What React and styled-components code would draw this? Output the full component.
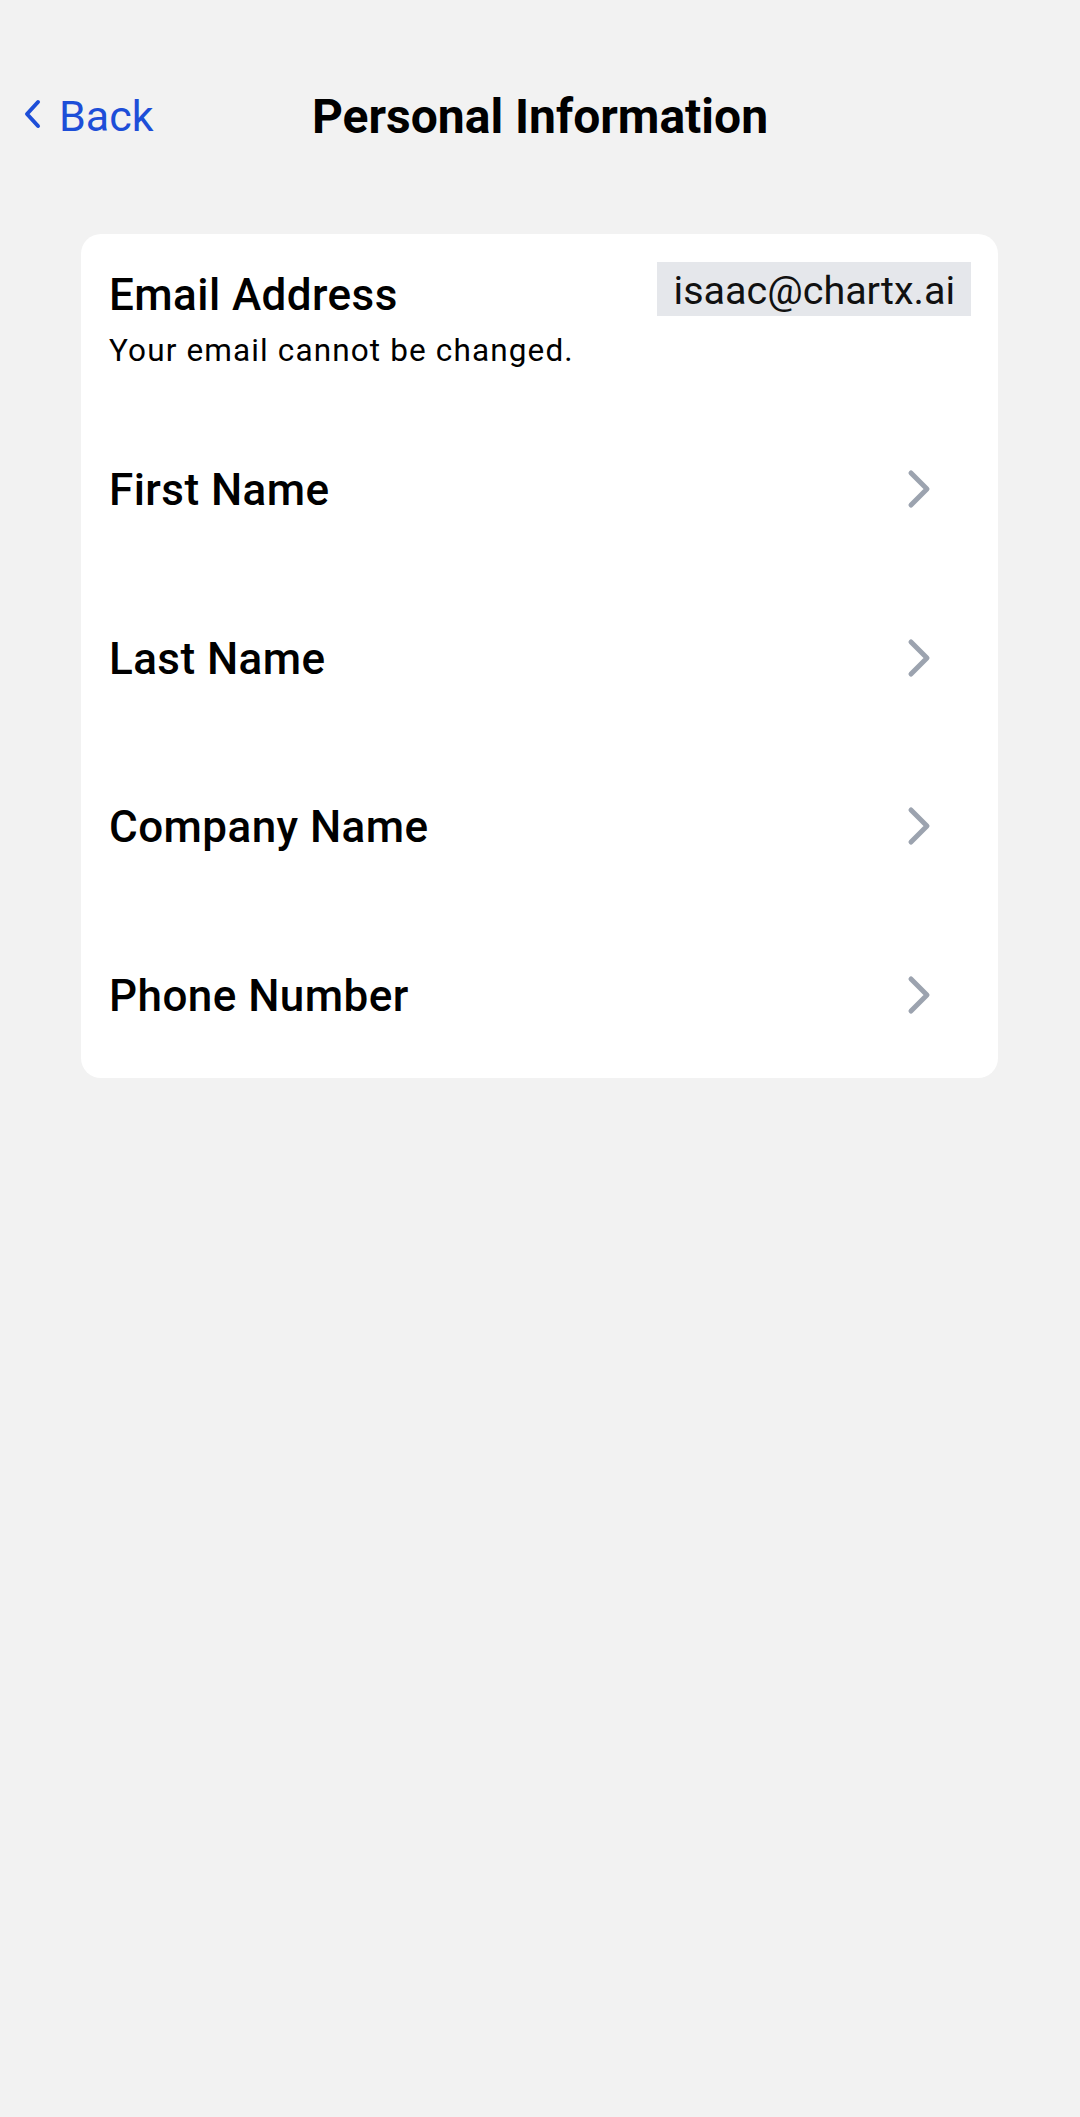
import styled, { createGlobalStyle } from "styled-components";

const GlobalStyle = createGlobalStyle`
  html, body {
    margin: 0;
    padding: 0;
    background: #f2f2f2;
  }
  body {
    font-family: Roboto, "Noto Sans", "Liberation Sans", sans-serif;
    color: #0a0a0a;
    -webkit-font-smoothing: antialiased;
  }
  * { box-sizing: border-box; }
`;

const Page = styled.div`
  width: 1080px;
  min-height: 2117px;
  background: #f2f2f2;
`;

const Header = styled.header`
  /* title centred on page, back link on the left */
  display: grid;
  grid-template-columns: 1fr auto 1fr;
  align-items: center;
  height: 70px;
  margin-top: 81px;
  padding: 0 23px;
`;

const BackButton = styled.button`
  justify-self: start;
  display: flex;
  align-items: center;
  gap: 16px;
  background: none;
  border: none;
  padding: 0;
  font-family: inherit;
  font-size: 43px;
  font-weight: 400;
  color: #1d4ed8;
  cursor: pointer;

  & svg {
    width: 20px;
    height: 32px;
    margin-top: -4px;
  }
`;

const Title = styled.h1`
  margin: 0;
  font-size: 48px;
  font-weight: 700;
  color: #000;
  white-space: nowrap;
`;

const Card = styled.section`
  margin: 83px 82px 0 81px;
  background: #fff;
  border-radius: 20px;
  overflow: hidden;
`;

const EmailBlock = styled.div`
  display: flex;
  justify-content: space-between;
  align-items: flex-start;
  height: 170px;
  padding: 0 27px 0 28px;
`;

const EmailText = styled.div`
  padding-top: 35px;
`;

const Label = styled.div`
  font-size: 44px;
  font-weight: 500;
  line-height: 1.2;
  letter-spacing: 0.01em;
  color: #000;
`;

const Hint = styled.div`
  margin-top: 9px;
  font-size: 31.5px;
  line-height: 1.3;
  letter-spacing: 0.036em;
  color: #000;
`;

const EmailBadge = styled.div`
  margin-top: 28px;
  height: 54px;
  display: flex;
  align-items: center;
  padding: 3px 16px 0 17px;
  background: #e5e7eb;
  font-size: 39.5px;
  color: #111;
`;

const Row = styled.button`
  width: 100%;
  height: 168.5px;
  display: flex;
  align-items: center;
  justify-content: space-between;
  padding: 5px 67px 0 28px;
  background: none;
  border: none;
  font-family: inherit;
  text-align: left;
  cursor: pointer;

  & svg {
    width: 24px;
    height: 40px;
    flex-shrink: 0;
    margin-top: -3px;
  }
`;

function ChevronLeft() {
  return (
    <svg viewBox="0 0 20 32" fill="none">
      <path
        d="M15 4 L4 16 L15 28"
        stroke="currentColor"
        strokeWidth="4"
        strokeLinecap="round"
        strokeLinejoin="round"
      />
    </svg>
  );
}

function ChevronRight() {
  return (
    <svg viewBox="0 0 24 40" fill="none">
      <path
        d="M4 4 L20 20 L4 36"
        stroke="#9ca3af"
        strokeWidth="5"
        strokeLinecap="round"
        strokeLinejoin="round"
      />
    </svg>
  );
}

const fields = ["First Name", "Last Name", "Company Name", "Phone Number"];

export default function App() {
  return (
    <Page>
      <GlobalStyle />
      <Header>
        <BackButton>
          <ChevronLeft />
          Back
        </BackButton>
        <Title>Personal Information</Title>
        <div />
      </Header>

      <Card>
        <EmailBlock>
          <EmailText>
            <Label>Email Address</Label>
            <Hint>Your email cannot be changed.</Hint>
          </EmailText>
          <EmailBadge>isaac@chartx.ai</EmailBadge>
        </EmailBlock>

        {fields.map((f) => (
          <Row key={f}>
            <Label>{f}</Label>
            <ChevronRight />
          </Row>
        ))}
      </Card>
    </Page>
  );
}
